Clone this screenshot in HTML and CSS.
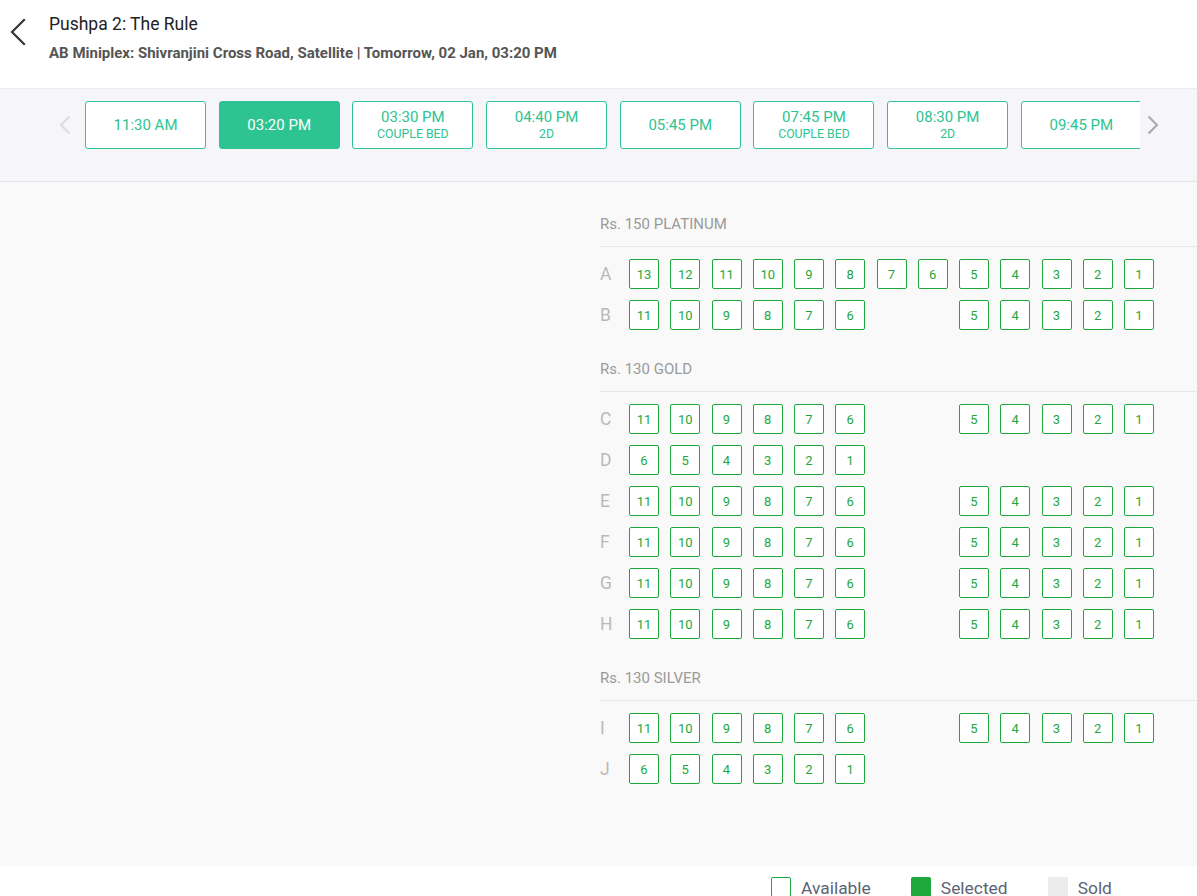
FILE: index.html
```html
<!DOCTYPE html>
<html lang="en">
<head>
<meta charset="utf-8">
<title>Pushpa 2: The Rule - Seat Layout</title>
<link rel="stylesheet" href="styles.css">
</head>
<body>
<header class="top">
  <button class="back" aria-label="Back">
    <svg width="24" height="28" viewBox="0 0 24 28"><path d="M18 2 L6 14 L18 26" fill="none" stroke="#333" stroke-width="2.2" stroke-linecap="square"/></svg>
  </button>
  <div class="info">
    <h1 class="title">Pushpa 2: The Rule</h1>
    <p class="sub">AB Miniplex: Shivranjini Cross Road, Satellite | Tomorrow, 02 Jan, 03:20 PM</p>
  </div>
</header>

<nav class="timebar">
  <span class="arrow">
    <svg width="12" height="20" viewBox="0 0 12 20"><path d="M10.5 1.5 L2 10 L10.5 18.5" fill="none" stroke="#dcdce0" stroke-width="2"/></svg>
  </span>
  <div class="slots-view">
    <div class="slots">
      <div class="slot"><span class="time">11:30 AM</span></div>
      <div class="slot active"><span class="time">03:20 PM</span></div>
      <div class="slot"><span class="time">03:30 PM</span><span class="tag">COUPLE BED</span></div>
      <div class="slot"><span class="time">04:40 PM</span><span class="tag">2D</span></div>
      <div class="slot"><span class="time">05:45 PM</span></div>
      <div class="slot"><span class="time">07:45 PM</span><span class="tag">COUPLE BED</span></div>
      <div class="slot"><span class="time">08:30 PM</span><span class="tag">2D</span></div>
      <div class="slot"><span class="time">09:45 PM</span></div>
    </div>
  </div>
  <span class="arrow">
    <svg width="12" height="20" viewBox="0 0 12 20"><path d="M1.5 1.5 L10 10 L1.5 18.5" fill="none" stroke="#a8a8aa" stroke-width="2"/></svg>
  </span>
</nav>

<main class="stage">
  <div class="seatmap">
    <section class="block">
      <h2 class="block-title">Rs. 150 PLATINUM</h2>
      <div class="rows">
        <div class="row"><span class="lbl">A</span><div class="seats">
          <span class="seat">13</span><span class="seat">12</span><span class="seat">11</span><span class="seat">10</span><span class="seat">9</span><span class="seat">8</span><span class="seat">7</span><span class="seat">6</span><span class="seat">5</span><span class="seat">4</span><span class="seat">3</span><span class="seat">2</span><span class="seat">1</span>
        </div></div>
        <div class="row"><span class="lbl">B</span><div class="seats">
          <span class="seat">11</span><span class="seat">10</span><span class="seat">9</span><span class="seat">8</span><span class="seat">7</span><span class="seat">6</span><span class="gap"></span><span class="gap"></span><span class="seat">5</span><span class="seat">4</span><span class="seat">3</span><span class="seat">2</span><span class="seat">1</span>
        </div></div>
      </div>
    </section>

    <section class="block">
      <h2 class="block-title">Rs. 130 GOLD</h2>
      <div class="rows">
        <div class="row"><span class="lbl">C</span><div class="seats">
          <span class="seat">11</span><span class="seat">10</span><span class="seat">9</span><span class="seat">8</span><span class="seat">7</span><span class="seat">6</span><span class="gap"></span><span class="gap"></span><span class="seat">5</span><span class="seat">4</span><span class="seat">3</span><span class="seat">2</span><span class="seat">1</span>
        </div></div>
        <div class="row"><span class="lbl">D</span><div class="seats">
          <span class="seat">6</span><span class="seat">5</span><span class="seat">4</span><span class="seat">3</span><span class="seat">2</span><span class="seat">1</span>
        </div></div>
        <div class="row"><span class="lbl">E</span><div class="seats">
          <span class="seat">11</span><span class="seat">10</span><span class="seat">9</span><span class="seat">8</span><span class="seat">7</span><span class="seat">6</span><span class="gap"></span><span class="gap"></span><span class="seat">5</span><span class="seat">4</span><span class="seat">3</span><span class="seat">2</span><span class="seat">1</span>
        </div></div>
        <div class="row"><span class="lbl">F</span><div class="seats">
          <span class="seat">11</span><span class="seat">10</span><span class="seat">9</span><span class="seat">8</span><span class="seat">7</span><span class="seat">6</span><span class="gap"></span><span class="gap"></span><span class="seat">5</span><span class="seat">4</span><span class="seat">3</span><span class="seat">2</span><span class="seat">1</span>
        </div></div>
        <div class="row"><span class="lbl">G</span><div class="seats">
          <span class="seat">11</span><span class="seat">10</span><span class="seat">9</span><span class="seat">8</span><span class="seat">7</span><span class="seat">6</span><span class="gap"></span><span class="gap"></span><span class="seat">5</span><span class="seat">4</span><span class="seat">3</span><span class="seat">2</span><span class="seat">1</span>
        </div></div>
        <div class="row"><span class="lbl">H</span><div class="seats">
          <span class="seat">11</span><span class="seat">10</span><span class="seat">9</span><span class="seat">8</span><span class="seat">7</span><span class="seat">6</span><span class="gap"></span><span class="gap"></span><span class="seat">5</span><span class="seat">4</span><span class="seat">3</span><span class="seat">2</span><span class="seat">1</span>
        </div></div>
      </div>
    </section>

    <section class="block">
      <h2 class="block-title">Rs. 130 SILVER</h2>
      <div class="rows">
        <div class="row"><span class="lbl">I</span><div class="seats">
          <span class="seat">11</span><span class="seat">10</span><span class="seat">9</span><span class="seat">8</span><span class="seat">7</span><span class="seat">6</span><span class="gap"></span><span class="gap"></span><span class="seat">5</span><span class="seat">4</span><span class="seat">3</span><span class="seat">2</span><span class="seat">1</span>
        </div></div>
        <div class="row"><span class="lbl">J</span><div class="seats">
          <span class="seat">6</span><span class="seat">5</span><span class="seat">4</span><span class="seat">3</span><span class="seat">2</span><span class="seat">1</span>
        </div></div>
      </div>
    </section>
  </div>
</main>

<footer class="legend">
  <div class="item"><span class="swatch avail"></span><span class="ltxt">Available</span></div>
  <div class="item"><span class="swatch sel"></span><span class="ltxt">Selected</span></div>
  <div class="item"><span class="swatch sold"></span><span class="ltxt">Sold</span></div>
</footer>
</body>
</html>
```

FILE: styles.css
```css
* { box-sizing: border-box; }

html, body {
  margin: 0;
  padding: 0;
  background: #ffffff;
  font-family: Roboto, "Liberation Sans", Arial, sans-serif;
  overflow: hidden;
}

/* Header */
.top {
  display: flex;
  align-items: flex-start;
  height: 89px;
  padding: 13px 0 0 6px;
  background: #fff;
  border-bottom: 1px solid #ececef;
}

.back {
  margin: 5px 19px 0 0;
  padding: 0;
  border: 0;
  background: none;
  width: 24px;
  height: 28px;
  display: flex;
}

.title {
  margin: 0;
  font-size: 17.5px;
  line-height: 22px;
  font-weight: 400;
  color: #222;
}

.sub {
  margin: 9px 0 0;
  font-size: 15px;
  line-height: 19px;
  font-weight: 700;
  color: #555;
}

/* Showtimes */
.timebar {
  display: flex;
  align-items: flex-start;
  height: 93px;
  padding: 12px 0 0 52px;
  background: #f5f5fa;
  border-bottom: 1px solid #e4e4e8;
}

.arrow {
  width: 26px;
  height: 48px;
  display: flex;
  align-items: center;
  justify-content: center;
}

.slots-view {
  width: 1055px;
  margin-left: 7px;
  overflow: hidden;
}

.slots {
  display: flex;
  gap: 12.7px;
}

.slot {
  flex: 0 0 121px;
  height: 48px;
  border: 1px solid #2dc492;
  border-radius: 3px;
  background: #fff;
  color: #2dc492;
  display: flex;
  flex-direction: column;
  align-items: center;
  justify-content: center;
}

.slot.active {
  background: #2dc492;
  color: #fff;
}

.time {
  font-size: 15px;
  line-height: 17px;
}

.tag {
  font-size: 12.3px;
  line-height: 14px;
  margin-top: 1px;
}

/* Seat area */
.stage {
  height: 684px;
  background: #f9f9f9;
  padding-top: 20px;
}

.seatmap {
  margin-left: 600px;
}

.block + .block {
  margin-top: 17px;
}

.block-title {
  margin: 0;
  height: 45px;
  line-height: 44px;
  font-size: 15px;
  font-weight: 400;
  color: #9a9a9a;
  border-bottom: 1px solid #e6e6e6;
}

.rows {
  display: flex;
  flex-direction: column;
  gap: 11px;
  padding-top: 12px;
}

.row {
  display: flex;
  align-items: center;
  height: 30px;
}

.lbl {
  width: 29px;
  font-size: 17.5px;
  color: #b9b9b9;
}

.seats {
  display: grid;
  grid-template-columns: repeat(13, 30px);
  column-gap: 11.25px;
}

.seat {
  width: 30px;
  height: 30px;
  border: 1px solid #1ea83c;
  border-radius: 2px;
  background: #fff;
  color: #1ea83c;
  font-size: 13px;
  display: flex;
  align-items: center;
  justify-content: center;
}

/* Legend */
.legend {
  display: flex;
  gap: 40px;
  height: 60px;
  padding: 11px 0 0 771px;
  background: #fff;
}

.item {
  display: flex;
  align-items: flex-start;
  gap: 10px;
}

.swatch {
  width: 20px;
  height: 20px;
  border-radius: 2px;
}

.swatch.avail { border: 1px solid #1ea83c; background: #fff; }
.swatch.sel { background: #1ea83c; }
.swatch.sold { background: #ececec; }

.ltxt {
  font-size: 17.4px;
  line-height: 20px;
  margin-top: 1px;
  color: #5a6473;
}
```
